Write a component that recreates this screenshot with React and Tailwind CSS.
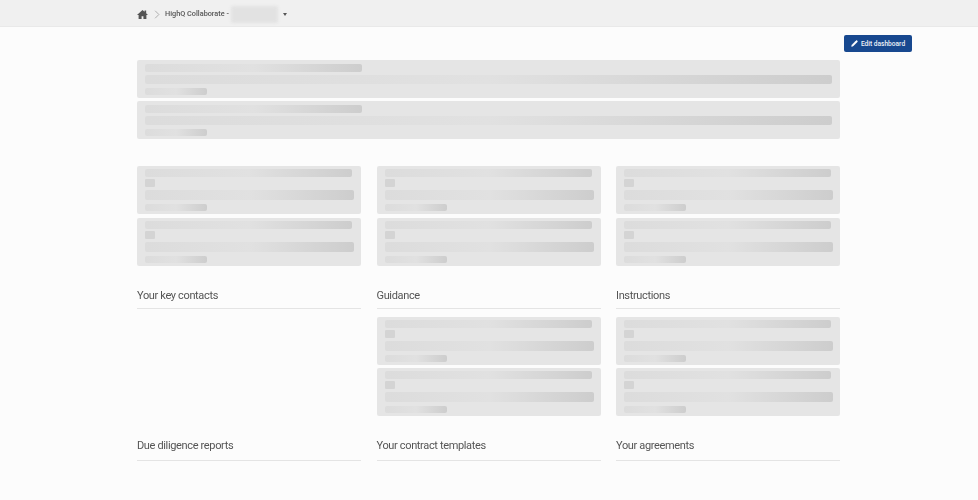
import { Pencil } from "lucide-react";

const shimmer = "rounded-[2px] bg-linear-to-r from-[#dcdcdc] via-[#e1e1e1] to-[#cdcdcd] blur-[0.4px]";

function WideSkeleton() {
  return (
    <div className="flex h-[38px] flex-col rounded-[2px] bg-[#e5e5e5] pt-1 pl-[8px] pr-[8px]">
      <div className={`h-2 w-[217px] ${shimmer}`} />
      <div className={`mt-[3px] h-[9px] w-full ${shimmer}`} />
      <div className={`mt-1 h-[7px] w-[62px] ${shimmer}`} />
    </div>
  );
}

function CardSkeleton() {
  return (
    <div className="flex h-[48px] flex-col rounded-[2px] bg-[#e5e5e5] pt-[3px] pl-[8px] pr-[8px]">
      <div className={`h-2 w-[207px] ${shimmer}`} />
      <div className="mt-[2px] h-[8px] w-[10px] rounded-[1px] bg-[#d4d4d4] blur-[0.3px]" />
      <div className={`mt-[3px] h-[10px] w-[209px] ${shimmer}`} />
      <div className={`mt-1 h-[7px] w-[62px] ${shimmer}`} />
    </div>
  );
}

function CardPair() {
  return (
    <div className="flex flex-col gap-[3.5px]">
      <CardSkeleton />
      <CardSkeleton />
    </div>
  );
}

function Heading({ children, height }) {
  return (
    <div className={`flex items-start border-b border-[#e4e4e4] pt-[22px] ${height}`}>
      <h2 className="text-[11px] leading-[16px] font-normal tracking-[-0.35px] text-[#555555] blur-[0.2px]">{children}</h2>
    </div>
  );
}

function HomeIcon() {
  return (
    <svg viewBox="0 0 24 24" className="h-[11px] w-[11px] fill-[#555555]">
      <path d="M12 2 0 13h3.5v9H10v-6h4v6h6.5v-9H24l-4-3.7V3h-3.5v3.1z" />
    </svg>
  );
}

export default function App() {
  return (
    <div className="min-h-[500px] bg-[#fcfcfc] font-['Roboto',sans-serif]">
      <header className="flex h-[27px] items-center border-b border-[#e9e9e9] bg-[#f0f0f0] pt-[2px] pl-[137px]">
        <HomeIcon />
        <svg viewBox="0 0 8 12" className="ml-[6px] h-[9px] w-[6px] fill-none stroke-[#9a9a9a] stroke-1">
          <path d="M1.5 1 6.5 6 1.5 11" />
        </svg>
        <span className="ml-[5px] text-[7.3px] font-medium text-[#555555] blur-[0.2px]">HighQ Collaborate -</span>
        <div className="ml-[2px] h-[17px] w-[47px] rounded-[2px] bg-[#e2e2e2] blur-[1.5px]" />
        <div className="ml-[5px] h-0 w-0 border-x-[2.5px] border-t-[3px] border-x-transparent border-t-[#555555]" />
      </header>

      <main className="ml-[137px] w-[775px]">
        <div className="flex justify-end pt-2">
          <button className="flex h-[17px] w-[68px] items-center justify-center gap-[3px] rounded-[2px] bg-[#17488f] text-[6.6px] font-medium text-[#eef2f8]">
            <Pencil className="h-[7px] w-[7px] fill-white" strokeWidth={2} />
            <span className="mt-[2px]">Edit dashboard</span>
          </button>
        </div>

        <div className="mt-2 flex w-[703px] flex-col gap-[3px]">
          <WideSkeleton />
          <WideSkeleton />
        </div>

        <div className="mt-[27px] grid w-[703px] grid-cols-3 gap-x-[15.5px]">
          <CardPair />
          <CardPair />
          <CardPair />

          <Heading height="h-[43px]">Your key contacts</Heading>
          <Heading height="h-[43px]">Guidance</Heading>
          <Heading height="h-[43px]">Instructions</Heading>

          <div />
          <div className="mt-2"><CardPair /></div>
          <div className="mt-2"><CardPair /></div>

          <Heading height="h-[45px]">Due diligence reports</Heading>
          <Heading height="h-[45px]">Your contract templates</Heading>
          <Heading height="h-[45px]">Your agreements</Heading>
        </div>
      </main>
    </div>
  );
}
